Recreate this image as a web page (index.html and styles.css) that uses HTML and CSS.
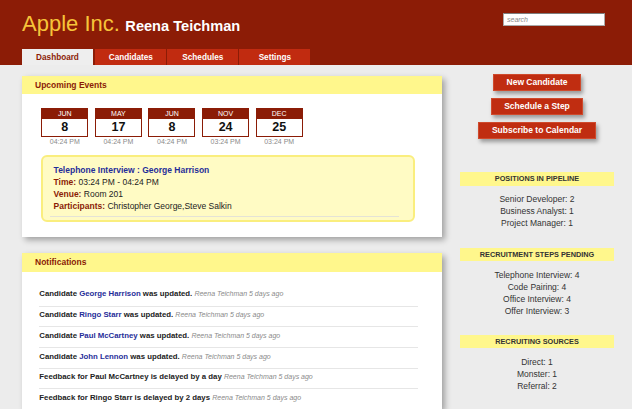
FILE: index.html
```html
<!DOCTYPE html>
<html>
<head>
<meta charset="utf-8">
<title>Dashboard</title>
<link rel="stylesheet" href="styles.css">
</head>
<body>
<div class="page">
  <header class="topbar">
    <div class="topbar-row">
      <h1 class="brand"><span class="company">Apple Inc.</span><span class="user">Reena Teichman</span></h1>
      <input class="search" type="text" placeholder="search">
    </div>
    <nav class="tabs">
      <a class="tab active">Dashboard</a>
      <a class="tab">Candidates</a>
      <a class="tab">Schedules</a>
      <a class="tab">Settings</a>
    </nav>
  </header>

  <main class="content">
    <section class="left">
      <div class="card">
        <div class="card-head">Upcoming Events</div>
        <div class="card-body events">
          <div class="cal-row">
            <div class="cal"><div class="cal-box"><div class="cal-month">JUN</div><div class="cal-day">8</div></div><div class="cal-time">04:24 PM</div></div>
            <div class="cal"><div class="cal-box"><div class="cal-month">MAY</div><div class="cal-day">17</div></div><div class="cal-time">04:24 PM</div></div>
            <div class="cal"><div class="cal-box"><div class="cal-month">JUN</div><div class="cal-day">8</div></div><div class="cal-time">04:24 PM</div></div>
            <div class="cal"><div class="cal-box"><div class="cal-month">NOV</div><div class="cal-day">24</div></div><div class="cal-time">03:24 PM</div></div>
            <div class="cal"><div class="cal-box"><div class="cal-month">DEC</div><div class="cal-day">25</div></div><div class="cal-time">03:24 PM</div></div>
          </div>
          <div class="event">
            <div class="event-inner">
              <div class="event-title">Telephone Interview : George Harrison</div>
              <div><span class="label">Time:</span> 03:24 PM - 04:24 PM</div>
              <div><span class="label">Venue:</span> Room 201</div>
              <div><span class="label">Participants:</span> Christopher George,Steve Salkin</div>
            </div>
          </div>
        </div>
      </div>

      <div class="card">
        <div class="card-head">Notifications</div>
        <ul class="notes">
          <li>Candidate <a class="name">George Harrison</a> was updated. <span class="meta">Reena Teichman 5 days ago</span></li>
          <li>Candidate <a class="name">Ringo Starr</a> was updated. <span class="meta">Reena Teichman 5 days ago</span></li>
          <li>Candidate <a class="name">Paul McCartney</a> was updated. <span class="meta">Reena Teichman 5 days ago</span></li>
          <li>Candidate <a class="name">John Lennon</a> was updated. <span class="meta">Reena Teichman 5 days ago</span></li>
          <li>Feedback for Paul McCartney is delayed by a day <span class="meta">Reena Teichman 5 days ago</span></li>
          <li>Feedback for Ringo Starr is delayed by 2 days <span class="meta">Reena Teichman 5 days ago</span></li>
        </ul>
      </div>
    </section>

    <aside class="side">
      <div class="actions">
        <a class="btn">New Candidate</a>
        <a class="btn">Schedule a Step</a>
        <a class="btn">Subscribe to Calendar</a>
      </div>
      <div class="stat">
        <div class="stat-head">POSITIONS IN PIPELINE</div>
        <div class="stat-list">
          <div>Senior Developer: 2</div>
          <div>Business Analyst: 1</div>
          <div>Project Manager: 1</div>
        </div>
      </div>
      <div class="stat">
        <div class="stat-head">RECRUITMENT STEPS PENDING</div>
        <div class="stat-list">
          <div>Telephone Interview: 4</div>
          <div>Code Pairing: 4</div>
          <div>Office Interview: 4</div>
          <div>Offer Interview: 3</div>
        </div>
      </div>
      <div class="stat">
        <div class="stat-head">RECRUITING SOURCES</div>
        <div class="stat-list">
          <div>Direct: 1</div>
          <div>Monster: 1</div>
          <div>Referral: 2</div>
        </div>
      </div>
    </aside>
  </main>
</div>
</body>
</html>
```
FILE: styles.css
```css
* { box-sizing: border-box; }
html, body { margin: 0; padding: 0; }
body {
  background: #ececec;
  font-family: "Liberation Sans", Arial, sans-serif;
  color: #333;
}
.page { height: 100vh; overflow: hidden; }

/* header */
.topbar {
  background: #8c1c06;
  height: 65px;
  display: flex;
  flex-direction: column;
}
.topbar-row {
  height: 49px;
  display: flex;
  justify-content: space-between;
  align-items: flex-start;
  padding: 13px 27px 0 22px;
}
.brand {
  margin: 0;
  font-weight: normal;
  line-height: 22px;
  display: flex;
  align-items: baseline;
  gap: 5.5px;
}
.company { font-size: 22px; color: #f6c43a; }
.user { font-size: 14.6px; font-weight: bold; color: #fff; }
.search {
  width: 102px;
  height: 13px;
  margin: 0;
  padding: 0 3px;
  border: 1px solid #a9a9a9;
  border-top-color: #7d7d7d;
  background: #fff;
  font-family: "Liberation Sans", Arial, sans-serif;
  font-size: 7px;
  font-style: italic;
  outline: none;
}
.search::placeholder { color: #8a8a8a; font-style: italic; }

.tabs {
  display: flex;
  gap: 1px;
  padding-left: 22px;
  height: 16px;
}
.tab {
  width: 71px;
  height: 16px;
  padding-top: 1px;
  line-height: 15px;
  text-align: center;
  font-size: 8.2px;
  font-weight: bold;
  color: #fff;
  background: #c12b10;
}
.tab.active {
  background: #eeeeee;
  color: #8b1c06;
  margin-right: 1.3px;
}

/* layout */
.content {
  display: flex;
  align-items: flex-start;
  gap: 18px;
  padding: 10.5px 0 0 22px;
}
.left {
  width: 420px;
  display: flex;
  flex-direction: column;
  gap: 16.6px;
}
.card {
  background: #fff;
  box-shadow: 3px 3px 6px rgba(0, 0, 0, 0.32);
}
.card-head {
  background: #fff78c;
  height: 18.6px;
  line-height: 18.6px;
  padding-left: 13px;
  font-size: 8.5px;
  font-weight: bold;
  color: #8b1c06;
}

/* events */
.events { padding: 13.5px 27px 14.4px 19.3px; }
.cal-row { display: flex; gap: 6.6px; }
.cal {
  width: 47px;
  display: flex;
  flex-direction: column;
  align-items: center;
}
.cal-box { width: 47px; border: 1px solid #8b1c06; }
.cal-month {
  background: #8b1c06;
  color: #fff;
  height: 10.6px;
  line-height: 10.6px;
  font-size: 7px;
  text-align: center;
}
.cal-day {
  height: 17px;
  line-height: 17px;
  font-size: 12.5px;
  font-weight: bold;
  color: #111;
  text-align: center;
}
.cal-time { font-size: 7px; line-height: 9px; color: #8a8a8a; }

.event {
  margin-top: 8.8px;
  background: #fffbc4;
  border: 2px solid #faee7e;
  border-radius: 6px;
  padding: 7px 14px 3.3px 6.7px;
}
.event-inner {
  padding: 0 0 4px 3.6px;
  border-bottom: 1px solid #e4e3d6;
  font-size: 8.5px;
  line-height: 12px;
  color: #222;
}
.event-title { color: #1f2e99; font-weight: bold; }
.label { color: #8b1c06; font-weight: bold; }

/* notifications */
.notes {
  list-style: none;
  margin: 0;
  padding: 14px 23.7px 0 17.3px;
}
.notes li {
  padding: 3.6px 0 6.1px;
  line-height: 10px;
  border-bottom: 1px solid #e6e6e6;
  font-size: 7.8px;
  font-weight: bold;
  color: #222;
  white-space: nowrap;
}
.notes li:last-child { border-bottom: 0; }
.name { color: #1f2e99; }
.meta {
  font-size: 7px;
  font-style: italic;
  font-weight: normal;
  color: #8a8a8a;
}

/* sidebar */
.side { width: 154px; margin-top: -1.5px; }
.actions {
  display: flex;
  flex-direction: column;
  align-items: center;
  gap: 7.3px;
}
.btn {
  height: 16.7px;
  padding: 0 12.5px;
  border: 1px solid #cf4a2c;
  background: #c02d11;
  color: #fff;
  font-size: 8.5px;
  font-weight: bold;
  line-height: 14.7px;
  box-shadow: 2px 3px 4px rgba(0, 0, 0, 0.35);
}
.actions + .stat { margin-top: 33.6px; }
.stat-head {
  height: 13.4px;
  line-height: 13.4px;
  background: #fff78c;
  text-align: center;
  font-size: 7.3px;
  font-weight: bold;
  color: #333;
}
.stat-list {
  padding: 7.7px 0 18.3px;
  line-height: 12px;
  font-size: 8.5px;
  text-align: center;
  color: #333;
}
```
